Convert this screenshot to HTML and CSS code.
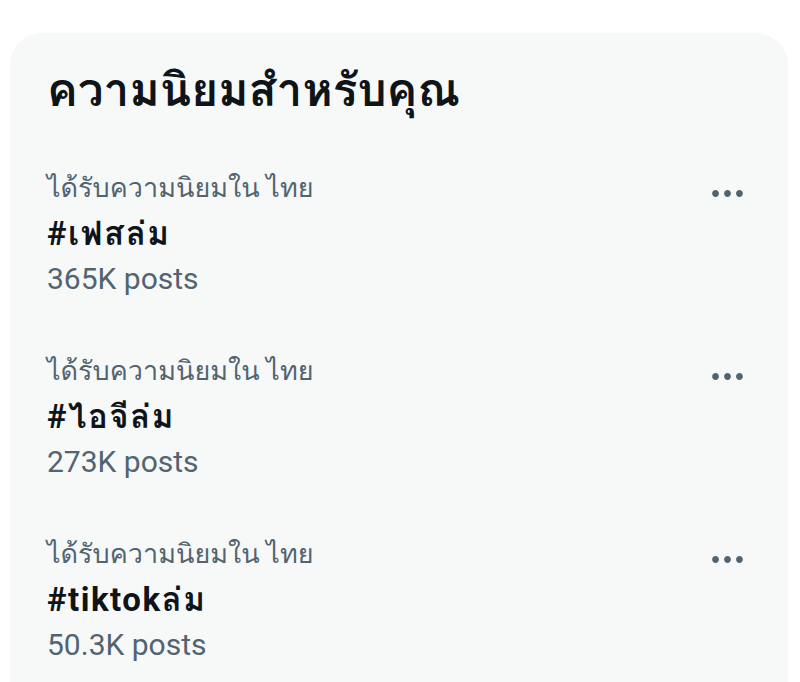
FILE: index.html
```html
<!DOCTYPE html>
<html>
	<head>
		<meta charset="utf-8">
		<title>ความนิยมสำหรับคุณ</title>
		<link rel="stylesheet" href="styles.css">
	</head>
	<body>
		<div class="panel">
			<h2 class="title">ความนิยมสำหรับคุณ</h2>

			<div class="trend">
				<div class="info">
					<div class="meta">ได้รับความนิยมใน ไทย</div>
					<div class="tag">#เฟสล่ม</div>
					<div class="count">365K posts</div>
				</div>
				<svg class="more" viewBox="0 0 24 24"><path d="M3 12c0-1.1.9-2 2-2s2 .9 2 2-.9 2-2 2-2-.9-2-2zm9 2c1.1 0 2-.9 2-2s-.9-2-2-2-2 .9-2 2 .9 2 2 2zm7 0c1.1 0 2-.9 2-2s-.9-2-2-2-2 .9-2 2 .9 2 2 2z"/></svg>
			</div>

			<div class="trend">
				<div class="info">
					<div class="meta">ได้รับความนิยมใน ไทย</div>
					<div class="tag">#ไอจีล่ม</div>
					<div class="count">273K posts</div>
				</div>
				<svg class="more" viewBox="0 0 24 24"><path d="M3 12c0-1.1.9-2 2-2s2 .9 2 2-.9 2-2 2-2-.9-2-2zm9 2c1.1 0 2-.9 2-2s-.9-2-2-2-2 .9-2 2 .9 2 2 2zm7 0c1.1 0 2-.9 2-2s-.9-2-2-2-2 .9-2 2 .9 2 2 2z"/></svg>
			</div>

			<div class="trend">
				<div class="info">
					<div class="meta">ได้รับความนิยมใน ไทย</div>
					<div class="tag">#tiktokล่ม</div>
					<div class="count">50.3K posts</div>
				</div>
				<svg class="more" viewBox="0 0 24 24"><path d="M3 12c0-1.1.9-2 2-2s2 .9 2 2-.9 2-2 2-2-.9-2-2zm9 2c1.1 0 2-.9 2-2s-.9-2-2-2-2 .9-2 2 .9 2 2 2zm7 0c1.1 0 2-.9 2-2s-.9-2-2-2-2 .9-2 2 .9 2 2 2z"/></svg>
			</div>
		</div>
	</body>
</html>
```

FILE: styles.css
```css
body {
	margin: 0;
	background: #ffffff;
	font-family: Roboto, Loma, Garuda, "Noto Sans Thai Looped", "Noto Sans Thai", sans-serif;
	color: #0f1419;
}
.panel {
	margin: 33px 12px 0 10px;
	height: 649px;
	background: #f7f9f9;
	border-radius: 32px 32px 0 0;
	padding: 32px 40px 0 37px;
	box-sizing: border-box;
	overflow: hidden;
}
.title {
	margin: 0 0 27px 0;
	font-size: 46px;
	line-height: 50px;
	font-weight: bold;
}
.trend {
	display: flex;
	justify-content: space-between;
	align-items: flex-start;
	padding: 24px 0;
}
.meta {
	font-size: 27px;
	line-height: 45px;
	color: #536471;
}
.tag {
	font-size: 33px;
	line-height: 45px;
	font-weight: bold;
	letter-spacing: 1.5px;
}
.count {
	font-size: 30px;
	line-height: 45px;
	color: #536471;
}
.more {
	width: 41px;
	height: 41px;
	margin-top: 7px;
	fill: #536471;
}
```
